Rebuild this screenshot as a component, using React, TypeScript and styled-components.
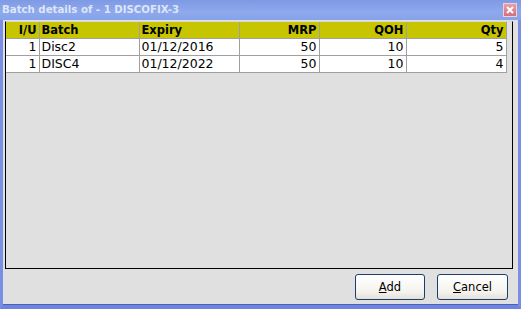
import styled, { createGlobalStyle } from "styled-components";

const GlobalStyle = createGlobalStyle`
  html, body {
    margin: 0;
    padding: 0;
    background: #ffffff;
  }
  * {
    box-sizing: border-box;
  }
`;

const Window = styled.div`
  width: 521px;
  height: 309px;
  display: flex;
  flex-direction: column;
  background: #e0e0e0;
  border-left: 3px solid #7b8fe2;
  border-right: 3px solid #7b8fe2;
  border-bottom: 4px solid #6f84dc;
  box-shadow: inset 0 -1px 0 #4a5fc0;
  font-family: "DejaVu Sans", Verdana, sans-serif;
`;

const TitleBar = styled.div`
  height: 20px;
  margin: 0 -3px;
  padding: 0 4px 1px 2px;
  display: flex;
  align-items: center;
  justify-content: space-between;
  background: linear-gradient(#7e9ae4, #8ea9ec 60%, #86a2ea);
`;

const Title = styled.span`
  font-size: 10.2px;
  font-weight: bold;
  color: #dde6f9;
`;

const CloseButton = styled.div`
  width: 14px;
  height: 14px;
  display: flex;
  align-items: center;
  justify-content: center;
  background: linear-gradient(#e8a0a8, #d2707c);
  border: 1px solid #f0d0d4;
`;

const Body = styled.div`
  flex: 1;
  display: flex;
  flex-direction: column;
  padding: 1px 5px 0 2px;
`;

const GridBox = styled.div`
  height: 248px;
  border: 1px solid #000000;
  border-top-color: #d8d8d8;
  background: #e0e0e0;
`;

const Grid = styled.table`
  border-collapse: collapse;
  table-layout: fixed;
  width: 500px;
`;

const HeadCell = styled.th<{ $align?: "left" | "right" }>`
  height: 16px;
  padding: 0 2px;
  background: #c6c500;
  color: #000000;
  font-size: 11.5px;
  font-weight: bold;
  line-height: 14px;
  text-align: ${(p) => p.$align ?? "left"};
  border-right: 1px solid #a0a0a0;
  border-bottom: 1px solid #a0a0a0;
  white-space: nowrap;
`;

const Cell = styled.td<{ $align?: "left" | "right" }>`
  height: 17px;
  padding: 0 2px;
  background: #ffffff;
  color: #000000;
  font-size: 12.5px;
  line-height: 15px;
  text-align: ${(p) => p.$align ?? "left"};
  border-right: 1px solid #a0a0a0;
  border-bottom: 1px solid #a0a0a0;
  white-space: nowrap;
`;

const ButtonRow = styled.div`
  display: flex;
  justify-content: flex-end;
  gap: 12px;
  padding: 5px 5px 0 0;
`;

const Button = styled.button<{ $w: number }>`
  width: ${(p) => p.$w}px;
  height: 26px;
  border: 1px solid #1c3e6e;
  border-radius: 3px;
  background: linear-gradient(#ffffff, #f4f3ee 70%, #e2e0d6);
  font-family: "DejaVu Sans", Verdana, sans-serif;
  font-size: 11.5px;
  color: #000000;
  padding: 0;
  u {
    text-decoration: underline;
  }
`;

type Col = { title: string; width: number; align: "left" | "right" };

const columns: Col[] = [
  { title: "I/U", width: 33, align: "right" },
  { title: "Batch", width: 100, align: "left" },
  { title: "Expiry", width: 100, align: "left" },
  { title: "MRP", width: 80, align: "right" },
  { title: "QOH", width: 87, align: "right" },
  { title: "Qty", width: 100, align: "right" },
];

const rows = [
  ["1", "Disc2", "01/12/2016", "50", "10", "5"],
  ["1", "DISC4", "01/12/2022", "50", "10", "4"],
];

export default function App() {
  return (
    <>
      <GlobalStyle />
      <Window>
        <TitleBar>
          <Title>Batch details of - 1 DISCOFIX-3</Title>
          <CloseButton>
            <svg width="8" height="8" viewBox="0 0 8 8">
              <path d="M1 1 L7 7 M7 1 L1 7" stroke="#ffffff" strokeWidth="2" />
            </svg>
          </CloseButton>
        </TitleBar>
        <Body>
          <GridBox>
            <Grid>
              <colgroup>
                {columns.map((c) => (
                  <col key={c.title} style={{ width: c.width }} />
                ))}
              </colgroup>
              <thead>
                <tr>
                  {columns.map((c) => (
                    <HeadCell key={c.title} $align={c.align}>
                      {c.title}
                    </HeadCell>
                  ))}
                </tr>
              </thead>
              <tbody>
                {rows.map((r, i) => (
                  <tr key={i}>
                    {r.map((v, j) => (
                      <Cell key={j} $align={columns[j].align}>
                        {v}
                      </Cell>
                    ))}
                  </tr>
                ))}
              </tbody>
            </Grid>
          </GridBox>
          <ButtonRow>
            <Button $w={70}>
              <u>A</u>dd
            </Button>
            <Button $w={71}>
              <u>C</u>ancel
            </Button>
          </ButtonRow>
        </Body>
      </Window>
    </>
  );
}
